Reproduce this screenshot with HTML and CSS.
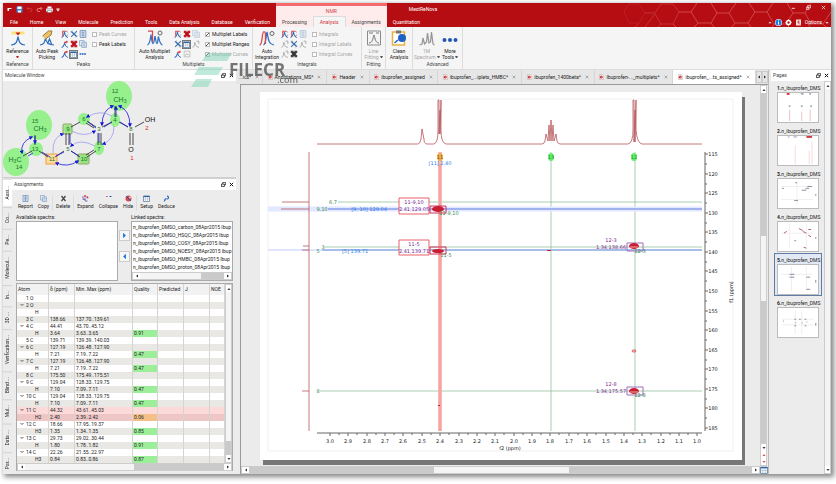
FILE: index.html
```html
<!DOCTYPE html>
<html lang="en">

<head>
    <meta charset="UTF-8">
    <meta name="viewport" content="width=device-width, initial-scale=1.0">
    <title>MestReNova</title>
    <link rel="stylesheet" href="styles.css">
</head>

<body>
    <!-- shared icons -->
    <svg class="defs" aria-hidden="true">
        <symbol id="i-peak" viewBox="0 0 14 14"><path d="M1 13C5 12 5 9 6 3C7 9 8 12 12 13" fill="none" stroke="#2c6fc0" stroke-width="1.8"/><path d="M3 12V2H9" fill="none" stroke="#d9464c" stroke-width="1.8"/><path d="M9 2l3 2M9 12l3-4" stroke="#555"/></symbol>
        <symbol id="i-pick" viewBox="0 0 14 14"><path d="M1 13C5 12 5 9 6 6C7 9 8 12 12 13" fill="none" stroke="#2c6fc0" stroke-width="1.8"/><path d="M5 4l6-3 1 3-4 2z" fill="#d9464c"/></symbol>
        <symbol id="i-tools" viewBox="0 0 14 14"><path d="M2 2l10 10" stroke="#2c6fc0" stroke-width="2.4"/><path d="M12 2L2 12" stroke="#47709c" stroke-width="1.8"/><path d="M1 4l3-3M10 13l3-3" stroke="#8c9db0" stroke-width="1.4"/></symbol>
        <symbol id="i-del" viewBox="0 0 14 14"><path d="M2 2l10 10M12 2L2 12" stroke="#c5161d" stroke-width="4"/><path d="M7 1v12" stroke="#8a1014" stroke-width="1.4"/></symbol>
        <symbol id="i-list" viewBox="0 0 14 14"><path d="M2 1h10v12H2z" fill="#e6eef8" stroke="#5d82ae" stroke-width="1.3"/><path d="M4 4h6M4 7h6M4 10h6M7 2v10" stroke="#5d82ae"/></symbol>
        <symbol id="i-copy" viewBox="0 0 14 14"><path d="M1 1h8v9H1z" fill="#e8eff8" stroke="#7c99bb" stroke-width="1.2"/><path d="M5 4h8v9H5z" fill="#d8e5f3" stroke="#7c99bb" stroke-width="1.2"/><path d="M7 7h4M7 10h4" stroke="#7c99bb"/></symbol>
        <symbol id="i-table" viewBox="0 0 14 14"><path d="M1 2h12v11H1z" fill="#fff" stroke="#44688e" stroke-width="1.3"/><path d="M1 3h12" stroke="#2b66a8" stroke-width="2.4"/><path d="M5 4v9M9 4v9M1 8h12" stroke="#9db2c8"/></symbol>
        <symbol id="i-gray" viewBox="0 0 14 14"><path d="M1 13C4 12 4 9 5 4C6 9 7 12 12 13M8 2h4v5" fill="none" stroke="#a2a2a2" stroke-width="1.5"/></symbol>
        <symbol id="i-graybox" viewBox="0 0 14 14"><path d="M2 2h10v10H2zM4 10l2-4 2 3 2-2" fill="none" stroke="#b4b4b4" stroke-width="1.3"/></symbol>
        <symbol id="i-dots" viewBox="0 0 14 14"><path d="M1 7h3M5 7h3M9 7h3" stroke="#1d5dc0" stroke-width="2.4"/></symbol>
        <symbol id="i-doc" viewBox="0 0 10 12"><path d="M1 1h6l2 2v8H1z" fill="#fff" stroke="#b9a0a0"/><circle cx="4.500" cy="6" r="3" fill="#cc1f26"/><path d="M3 5l3 2" stroke="#fff"/></symbol>
        <symbol id="i-float" viewBox="0 0 12 12"><path d="M4 1h7v6H4z" fill="none" stroke="#111" stroke-width="1.6"/><path d="M1 5h7v6H1z" fill="#fff" stroke="#111" stroke-width="1.8"/></symbol>
        <symbol id="i-close" viewBox="0 0 12 12"><path d="M2 2l8 8M10 2l-8 8" stroke="#111" stroke-width="2.4"/></symbol>
        <symbol id="i-x" viewBox="0 0 12 12"><path d="M2 2l8 8M10 2l-8 8" stroke="#777" stroke-width="1.6"/></symbol>
        <symbol id="i-up" viewBox="0 0 10 10"><path d="M1 7h8L5 3z"/></symbol>
        <symbol id="i-down" viewBox="0 0 10 10"><path d="M1 3h8L5 7z"/></symbol>
        <symbol id="i-left" viewBox="0 0 10 10"><path d="M7 1v8L3 5z"/></symbol>
        <symbol id="i-right" viewBox="0 0 10 10"><path d="M3 1v8l4-4z"/></symbol>
    </svg>

    <div class="window">
        <header class="header">
            <svg class="hexes" viewBox="0 0 212 24" preserveAspectRatio="xMaxYMin slice" aria-hidden="true">
                <g fill="none" stroke="#d0464a" stroke-width="1">
                    <path opacity=".3" d="M5 8l5-7h10l6 9-6 10H10z"/>
                    <path opacity=".6" d="M26 10h10l6-9h12l6 8-6 12H42l-6-10M20 20l-4 4M42 21l-3 3M36 11l-10 13"/>
                    <path d="M60 9h12l6-9M72 9l7 11h13l6-10-6-10M54 21l3 3M79 20l-4 4M92 20l3 4M98 10h12l7-10M110 10l6 10h13l7-11-6-9M116 20l-3 4M129 20l3 4M136 9h12l6-9M148 9l7 12h12l7-11-6-10M155 21l-2 3M167 21l3 3M174 10h12l6-10M186 10l6 11h12l8-12M192 21l-2 3M204 21l3 3"/>
                </g>
            </svg>
            <div class="header-left">
                <div class="quick">
                    <svg viewBox="0 0 14 14"><path d="M3 4h8v2H6v4H3z" fill="#fff"/></svg>
                    <svg viewBox="0 0 14 14"><path d="M1 1h12v12H1z" fill="#3e83d6"/><path d="M3 1h8v5H3zM4 9h6v4H4z" fill="#fff"/></svg>
                    <svg viewBox="0 0 14 14"><path d="M3 5h6a3 3 0 0 1 0 6H7M5 2L2 5l3 3" fill="none" stroke="#de4040" stroke-width="1.5"/></svg>
                    <svg viewBox="0 0 14 14"><path d="M11 5H5a3 3 0 0 0 0 6h3M9 2l3 3-3 3" fill="none" stroke="#f08a8a" stroke-width="1.8"/></svg>
                    <svg viewBox="0 0 14 14"><path d="M3 1h8v4H3z" fill="#fff"/><path d="M0 5h14v6H0z" fill="#d9dee6"/><path d="M3 9h8v4H3z" fill="#fff" stroke="#777"/></svg>
                    <svg class="tiny" viewBox="0 0 10 10" fill="#fff"><path d="M1 1h8v2H1zM1 4h8L5 9z"/></svg>
                </div>
                <nav class="tabs">
                    <button>File</button><button>Home</button><button>View</button><button>Molecule</button><button>Prediction</button><button>Tools</button><button>Data Analysis</button><button>Database</button><button>Verification</button>
                </nav>
            </div>
            <div class="context">
                <span class="context-name">NMR</span>
                <nav class="tabs">
                    <button>Processing</button><button class="active">Analysis</button><button>Assignments</button>
                </nav>
            </div>
            <div class="header-mid">
                <span class="app-name">MestReNova</span>
                <nav class="tabs"><button>Quantitation</button></nav>
            </div>
            <div class="header-right">
                <div class="sys">
                    <button aria-label="Minimize"><svg viewBox="0 0 12 12"><path d="M2 8h7" stroke="#fff" stroke-width="2"/></svg></button>
                    <button aria-label="Restore"><svg viewBox="0 0 12 12"><path d="M4 1h7v6H4zM1 5h6v6H1z" fill="none" stroke="#fff" stroke-width="1.5"/></svg></button>
                    <button aria-label="Close"><svg viewBox="0 0 12 12"><path d="M2 2l8 8M10 2l-8 8" stroke="#fff" stroke-width="1.6"/></svg></button>
                </div>
                <div class="options">
                    <svg viewBox="0 0 10 10" fill="#fff"><use href="#i-up"/></svg>
                    <svg viewBox="0 0 14 14"><circle cx="7" cy="7" r="7" fill="#fff"/><circle cx="7" cy="7" r="6" fill="#1e7be0"/><path d="M7 3v2M7 6v5" stroke="#fff" stroke-width="2"/></svg>
                    <svg viewBox="0 0 14 14"><circle cx="7" cy="7" r="4" fill="none" stroke="#fff" stroke-width="3"/><path d="M7 1v2M7 11v2M1 7h2M11 7h2" stroke="#fff" stroke-width="2"/></svg>
                    <svg viewBox="0 0 14 14"><path d="M2 1h10v12H2z" fill="#f5dede"/><path d="M5 4h3v3H5M7 8l3 3" stroke="#c5161d" stroke-width="1.5" fill="none"/></svg>
                    <button>Options</button>
                    <svg class="tiny" viewBox="0 0 10 10" fill="#fff"><use href="#i-down"/></svg>
                </div>
            </div>
        </header>

        <section class="ribbon">
            <div class="group g-reference">
                <div class="group-body">
                    <button class="big"><svg viewBox="0 0 32 32"><path d="M3 3h26v6H3z" fill="#f8e27c"/><path d="M11 5h10l-5 6z" fill="#c5161d"/><path d="M2 30C12 29 14 25 16 13C18 25 20 29 30 30" fill="none" stroke="#2c6fc0" stroke-width="2.5"/></svg>Reference<i class="caret"></i></button>
                </div>
                <span class="group-name">Reference</span>
            </div>
            <div class="group g-peaks">
                <div class="group-body">
                    <button class="big"><svg viewBox="0 0 32 32"><path d="M2 30C10 29 11 26 13 16C15 26 18 29 30 30M17 28l4-10 4 10" fill="none" stroke="#2c6fc0" stroke-width="2.5"/><path d="M7 12L19 2h7l-2 8-11 8" fill="#e9c26a" stroke="#9d7a33" stroke-width="2"/></svg>Auto Peak<br>Picking</button>
                    <div class="icons">
                        <svg><use href="#i-peak"/></svg><svg><use href="#i-tools"/></svg><svg><use href="#i-list"/></svg>
                        <svg><use href="#i-pick"/></svg><svg><use href="#i-del"/></svg><svg><use href="#i-copy"/></svg>
                        <svg><use href="#i-pick"/></svg><svg class="on"><use href="#i-table"/></svg><svg><use href="#i-dots"/></svg>
                    </div>
                    <div class="checks">
                        <label class="off"><input type="checkbox" disabled>Peak Curves</label>
                        <label><input type="checkbox">Peak Labels</label>
                    </div>
                </div>
                <span class="group-name">Peaks</span>
            </div>
            <div class="group g-multiplets">
                <div class="group-body">
                    <button class="big"><svg viewBox="0 0 32 32"><path d="M1 30C6 28 6 22 8 9C10 22 10 27 12 27S14 22 16 12C18 22 18 27 20 27S21 22 23 13C25 24 27 29 31 30" fill="none" stroke="#2c6fc0" stroke-width="2.5"/><path d="M2 2h9v22" fill="none" stroke="#d9464c" stroke-width="2.5"/><circle cx="26" cy="6" r="4" fill="none" stroke="#666" stroke-width="2"/></svg>Auto Multiplet<br>Analysis</button>
                    <div class="icons">
                        <svg><use href="#i-peak"/></svg><svg><use href="#i-del"/></svg><svg class="dim"><use href="#i-copy"/></svg>
                        <svg><use href="#i-tools"/></svg><svg class="on"><use href="#i-table"/></svg><svg><use href="#i-gray"/></svg>
                        <svg><use href="#i-pick"/></svg><svg><use href="#i-graybox"/></svg>
                    </div>
                    <div class="checks">
                        <label><input type="checkbox" checked>Multiplet Labels</label>
                        <label><input type="checkbox" checked>Multiplet Ranges</label>
                        <label class="off"><input type="checkbox" checked disabled>Multiplet Curves</label>
                    </div>
                </div>
                <span class="group-name">Multiplets</span>
            </div>
            <div class="group g-integrals">
                <div class="group-body">
                    <button class="big"><svg viewBox="0 0 32 32"><path d="M9 30C14 28 13 18 16 4C19 18 18 28 30 30" fill="none" stroke="#2c6fc0" stroke-width="2.5"/><path d="M1 30C8 30 5 3 10 3S12 20 13 28" fill="none" stroke="#d9464c" stroke-width="2.5"/><circle cx="26" cy="7" r="4" fill="none" stroke="#666" stroke-width="2"/></svg>Auto<br>Integration</button>
                    <div class="icons">
                        <svg><use href="#i-peak"/></svg><svg><use href="#i-peak"/></svg><svg class="dim"><use href="#i-list"/></svg>
                        <svg><use href="#i-gray"/></svg><svg><use href="#i-tools"/></svg><svg><use href="#i-gray"/></svg>
                        <svg><use href="#i-gray"/></svg><svg class="mono"><use href="#i-del"/></svg>
                    </div>
                    <div class="checks">
                        <label class="off"><input type="checkbox" disabled>Integrals</label>
                        <label class="off"><input type="checkbox" disabled>Integral Labels</label>
                        <label class="off"><input type="checkbox" disabled>Integral Curves</label>
                    </div>
                </div>
                <span class="group-name">Integrals</span>
            </div>
            <div class="group g-fitting">
                <div class="group-body">
                    <button class="big off"><svg viewBox="0 0 32 32"><path d="M3 2h26v28H3z" fill="#f4f4f4" stroke="#8b8b8b" stroke-width="2"/><path d="M6 26C14 25 13 18 16 10C19 18 18 25 26 26M6 6h8M20 6h6" fill="none" stroke="#777" stroke-width="2"/></svg>Line<br>Fitting<i class="caret side"></i></button>
                </div>
                <span class="group-name">Fitting</span>
            </div>
            <div class="group g-clean">
                <div class="group-body">
                    <button class="big"><svg viewBox="0 0 32 32"><path d="M3 4h24v26H3z" fill="#fff" stroke="#e8b33c" stroke-width="3"/><path d="M10 1h10v6H10z" fill="#777"/><circle cx="22" cy="16" r="8" fill="#1d62c4"/><path d="M7 26l7-6" stroke="#1d62c4" stroke-width="3"/></svg>Clean<br>Analysis</button>
                </div>
                <span class="group-name">&nbsp;</span>
            </div>
            <div class="group g-advanced">
                <div class="group-body">
                    <button class="big off"><svg viewBox="0 0 32 32"><path d="M1 30l5-2 2-12 3 12 4-4 2-18 3 20 3-2 2-20 3 24 3 2" fill="none" stroke="#969696" stroke-width="2.5"/></svg>1M<br>Spectrum<i class="caret side"></i></button>
                    <button class="big"><svg viewBox="0 0 32 32" fill="#2254b8"><circle cx="5" cy="20" r="4"/><circle cx="16" cy="20" r="4"/><circle cx="27" cy="20" r="4"/></svg>More<br>Tools<i class="caret side"></i></button>
                </div>
                <span class="group-name">Advanced</span>
            </div>
        </section>

        <main class="main">
            <aside class="left">
                <section class="panel">
                    <h2 class="panel-title">Molecule Window<span><svg><use href="#i-float"/></svg><svg><use href="#i-close"/></svg></span></h2>
                    <svg class="molecule" viewBox="3 81 233 96">
                        <defs>
                            <marker id="arr" viewBox="0 0 6 6" refX="4" refY="3" markerWidth="4" markerHeight="4" markerUnits="userSpaceOnUse" orient="auto-start-reverse"><path d="M0 0l6 3-6 3z" fill="#1616d8"/></marker>
                        </defs>
                        <g fill="#96f08c">
                            <ellipse cx="119" cy="96" rx="13" ry="15"/><ellipse cx="39" cy="125" rx="13" ry="15"/><ellipse cx="16" cy="162" rx="13" ry="14"/>
                            <ellipse cx="115" cy="120" rx="5" ry="7"/><circle cx="84" cy="119" r="6"/><ellipse cx="99" cy="148" rx="5" ry="7"/><circle cx="36" cy="149" r="7"/>
                            <circle cx="68" cy="129" r="4"/><circle cx="84" cy="159" r="5"/>
                        </g>
                        <g fill="#96dc78" fill-opacity=".6" stroke="#8aa860"><rect x="63" y="124" width="9" height="10" rx="1"/><rect x="78" y="154" width="11" height="10" rx="1"/></g>
                        <rect x="46" y="154" width="11" height="10" fill="#ffdc9c" stroke="#ee9c44"/>
                        <path d="M102 127l10-5M119 122l9 5M135 127l9-5M115 117v-11M87 121l9 6M86 123l8 5M98 133v12M101 133v12M96 151l-9 6M94 150l-8 5M80 157l-9-6M66 145v-12M69 145v-12M71 127l9-5M64 151l-9 6M48 157l-9-6M32 151l-9 5M35 145v-10M130 133v12M133 133v12" stroke="#222" stroke-width=".8" fill="none"/>
                        <g fill="none" stroke="#1616d8" stroke-width=".8" marker-start="url(#arr)" marker-end="url(#arr)">
                            <path d="M113 106Q102 110 102 125"/><path d="M119 106Q130 110 130 126"/><path d="M32 137Q20 142 22 153"/><path d="M56 163Q68 168 78 161"/>
                            <path d="M116 107v10M120 122l8 5M104 127l8-5M88 122l8 6M99 133v10M70 134v10M71 151l8 5M42 152l8 5M56 156l8-4M28 156l5-3M35 136v7"/>
                        </g>
                        <g fill="none" stroke="#9c9cf0" stroke-width=".8" marker-end="url(#arr)">
                            <path d="M112 116Q100 109 87 117"/><path d="M114 126Q114 140 103 144"/><path d="M72 131Q84 138 95 131"/><path d="M53 153Q52 137 63 134"/><path d="M95 146Q80 138 71 146"/>
                        </g>
                        <g class="atoms">
                            <text x="115" y="93">12</text><text x="120" y="102" class="el">CH<tspan dy="1" class="sub">3</tspan></text>
                            <text x="35" y="123">15</text><text x="40" y="131" class="el">CH<tspan dy="1" class="sub">3</tspan></text>
                            <text x="15" y="162" class="el">H<tspan dy="1" class="sub">3</tspan><tspan dy="-1">C</tspan></text><text x="19" y="169">14</text>
                            <text x="115" y="122">4</text><text x="84" y="121">6</text><text x="99" y="131">3</text><text x="99" y="151">7</text><text x="84" y="161">10</text><text x="68" y="151">5</text><text x="68" y="131">9</text><text x="131" y="131">8</text><text x="52" y="161">11</text><text x="35" y="151">13</text>
                            <text x="150" y="122" class="el dark">OH</text><text x="131" y="152" class="el dark">O</text>
                            <text x="147" y="130" class="red">2</text><text x="132" y="160" class="red">1</text>
                        </g>
                    </svg>
                </section>
                <section class="assign">
                    <nav class="side-tabs">
                        <button class="active">Assi...</button><button>Co...</button><button>Pe...</button><button>Molecul...</button><button>In...</button><button>3D ...</button><button>Verification...</button><button>Blind ...</button><button>Mul...</button><button>Data ...</button><button>Par...</button>
                    </nav>
                    <div class="assign-body">
                        <h2 class="panel-title">Assignments<span><svg><use href="#i-float"/></svg><svg><use href="#i-close"/></svg></span></h2>
                        <div class="toolbar">
                            <button><svg><use href="#i-list"/></svg>Report</button>
                            <button><svg><use href="#i-copy"/></svg>Copy</button>
                            <hr>
                            <button><svg viewBox="0 0 14 14"><path d="M3 2l8 10M11 2L3 12" stroke="#444" stroke-width="2.5"/></svg>Delete</button>
                            <hr>
                            <button><svg viewBox="0 0 14 14"><path d="M2 2v7h5M6 5v7h5M10 2v3" fill="none" stroke="#7a6fc0" stroke-width="2"/><circle cx="6" cy="2" r="2" fill="#d9464c"/><circle cx="11" cy="5" r="2" fill="#d9464c"/></svg>Expand</button>
                            <button><svg viewBox="0 0 14 14"><path d="M2 3h3" stroke="#d9464c" stroke-width="2"/><path d="M9 3h4" stroke="#2254b8" stroke-width="2"/></svg>Collapse</button>
                            <button><svg viewBox="0 0 14 14"><circle cx="7" cy="7" r="6" fill="#d9464c"/><path d="M2 2l10 10" stroke="#2254b8" stroke-width="2"/><circle cx="10" cy="5" r="2" fill="#f5d0d8"/></svg>Hide</button>
                            <hr>
                            <button><svg><use href="#i-table"/></svg>Setup</button>
                            <button><svg viewBox="0 0 14 14"><path d="M3 13c0-5 2-6 4-6M8 2a3 3 0 1 1 0 6" fill="none" stroke="#2c6fc0" stroke-width="2.5"/></svg>Deduce</button>
                        </div>
                        <div class="spectra">
                            <div class="available"><h3>Available spectra:</h3><ul></ul></div>
                            <div class="move">
                                <button aria-label="Link"><svg viewBox="0 0 10 10" fill="#1472e0"><use href="#i-right"/></svg></button>
                                <button aria-label="Unlink"><svg viewBox="0 0 10 10" fill="#1472e0"><use href="#i-left"/></svg></button>
                            </div>
                            <div class="linked">
                                <h3>Linked spectra:</h3>
                                <div class="list-box">
                                    <ul>
                                        <li>n_ibuprofen_DMSO_carbon_08Apr2015 Ibup</li>
                                        <li>n_ibuprofen_DMSO_HSQC_08Apr2015 Ibup</li>
                                        <li>n_ibuprofen_DMSO_COSY_08Apr2015 Ibup</li>
                                        <li>n_ibuprofen_DMSO_NOESY_08Apr2015 Ibup</li>
                                        <li>n_ibuprofen_DMSO_HMBC_08Apr2015 Ibup</li>
                                        <li>n_ibuprofen_DMSO_proton_08Apr2015 Ibup</li>
                                    </ul>
                                    <div class="bar h"><button><svg><use href="#i-left"/></svg></button><i class="thumb wide"></i><i class="rest"></i><button><svg><use href="#i-right"/></svg></button></div>
                                </div>
                            </div>
                        </div>
                        <div class="table-box">
                            <table>
                                <thead>
                                    <tr><th>Atom</th><th>δ (ppm)</th><th>Min..Max (ppm)</th><th>Quality</th><th>Predicted</th><th>J</th><th>NOE</th></tr>
                                </thead>
                                <tbody id="atoms"></tbody>
                            </table>
                            <div class="bar v"><button><svg><use href="#i-up"/></svg></button><i class="thumb tall"></i><i class="rest"></i><button><svg><use href="#i-down"/></svg></button></div>
                            <div class="bar h"><button><svg><use href="#i-left"/></svg></button><i class="thumb half"></i><i class="rest"></i><button><svg><use href="#i-right"/></svg></button></div>
                        </div>
                    </div>
                </section>
            </aside>

            <section class="center">
                <nav class="doc-tabs">
                    <div><button>...ics*</button><svg class="x"><use href="#i-x"/></svg></div>
                    <div><svg><use href="#i-doc"/></svg><button>Annotations_MS*</button><svg class="x"><use href="#i-x"/></svg></div>
                    <div><svg><use href="#i-doc"/></svg><button>Header</button><svg class="x"><use href="#i-x"/></svg></div>
                    <div><svg><use href="#i-doc"/></svg><button>ibuprofen_assigned</button><svg class="x"><use href="#i-x"/></svg></div>
                    <div><svg><use href="#i-doc"/></svg><button>ibuprofen_...iplets_HMBC*</button><svg class="x"><use href="#i-x"/></svg></div>
                    <div><svg><use href="#i-doc"/></svg><button>ibuprofen_1400beta*</button><svg class="x"><use href="#i-x"/></svg></div>
                    <div><svg><use href="#i-doc"/></svg><button>Ibuprofen-..._multiplets*</button><svg class="x"><use href="#i-x"/></svg></div>
                    <div class="active"><svg><use href="#i-doc"/></svg><button>ibuprofen_...ts_assigned*</button><svg class="x"><use href="#i-x"/></svg></div>
                    <span class="scroll-tabs"><button><svg><use href="#i-left"/></svg></button><button><svg><use href="#i-right"/></svg></button></span>
                </nav>
                <div class="canvas">
                    <div class="viewport">
                        <div class="sheet">
                            <svg class="plot" viewBox="260 92 482 368">
                                <path d="M268 99h465v352H268z" fill="none" stroke="#f0f0f0"/>
                                <g stroke="#84b890" stroke-opacity=".7">
                                    <path d="M338 202h364M325 247h377M320 391h382M551 152v279M635 152v279"/>
                                </g>
                                <path d="M268 209h434" stroke="#e2e8ff" stroke-width="5"/>
                                <path d="M328 209h374" stroke="#a2b2f0" stroke-width="2"/>
                                <path d="M268 250h434" stroke="#dfe5ff" stroke-width="2"/>
                                <path d="M322 250h380" stroke="#6f98d0"/>
                                <path d="M440 152v279" stroke="#f9b8b4" stroke-width="4"/>
                                <path d="M440 164v267" stroke="#ec918c" stroke-width="1"/>
                                <!-- 1D traces -->
                                <g fill="none" stroke="#b5555b" stroke-width=".8">
                                    <path d="M317 144H418Q420 144 421 139L422 129L424 139Q424 144 427 144H434Q438 143 438 130V100H439V134L440 110L440 134L441 100V130Q441 143 446 144H542L544 143L545 141L546 134L548 141L549 125L550 141L551 120L552 141L553 125L554 141L556 134L557 141L558 143L560 144H628Q633 143 633 130V100H634V142L635 110V142L636 100V130Q637 143 642 144H702"/>
                                    <path d="M309 152V431M282 202h27M281 209h28M303 246h6M302 250h7M302 391h7"/>
                                </g>
                                <ellipse cx="440" cy="157" rx="3" ry="4" fill="#f0ae4c"/>
                                <ellipse cx="551" cy="157" rx="3" ry="4" fill="#62f062"/>
                                <ellipse cx="634" cy="157" rx="3" ry="4" fill="#62f062"/>
                                <!-- cross peaks -->
                                <g fill="#fff" fill-opacity=".8" stroke="#e8606a"><path d="M399 198h30v16h-30zM399 240h30v15h-30z"/></g>
                                <g fill="none" stroke="#d0305c"><path d="M430 206h16v7h-16zM430 247h16v7h-16z"/></g>
                                <g fill="none" stroke="#a070b8"><path d="M627 243h16v8h-16zM627 387h16v8h-16z"/></g>
                                <g fill="#c81e32">
                                    <ellipse cx="438" cy="209" rx="6" ry="3"/><ellipse cx="438" cy="251" rx="6" ry="2"/>
                                    <ellipse cx="634" cy="246" rx="5" ry="3"/><ellipse cx="634" cy="391" rx="5" ry="3"/>
                                    <path d="M547 250h4v1h-4zM438 405h2v1h-2z"/>
                                </g>
                                <path d="M630 247h8M630 392h8" stroke="#f4a4aa"/>
                                <ellipse cx="634" cy="351" rx="2" ry="1" fill="none" stroke="#e05058"/>
                                <g class="labels">
                                    <text x="440" y="159" class="brown">11</text><text x="551" y="159" class="green">13</text><text x="634" y="159" class="green">12</text>
                                    <text x="440" y="165" class="blue">[11] 2.40</text>
                                    <text x="333" y="204" class="green">6,7</text><text x="322" y="211" class="green">9,10</text>
                                    <text x="323" y="249" class="green">3</text><text x="318" y="253" class="green">5</text><text x="318" y="393" class="green">8</text>
                                    <text x="369" y="211" class="blue">[9, 10] 129.04</text><text x="355" y="253" class="blue">[5] 139.71</text>
                                    <text x="414" y="204" class="purple">11-9,10</text><text x="414" y="211" class="purple">2.41,129.05</text>
                                    <text x="414" y="246" class="purple">11-5</text><text x="414" y="253" class="purple">2.41,139.71</text>
                                    <text x="611" y="242" class="purple">12-3</text><text x="611" y="249" class="purple">1.34,138.66</text>
                                    <text x="611" y="386" class="purple">12-8</text><text x="611" y="393" class="purple">1.34,175.57</text>
                                    <text x="449" y="215" class="green">11-9,10</text><text x="446" y="257" class="green">11-5</text>
                                    <text x="640" y="253" class="green">12-3</text><text x="640" y="397" class="green">12-8</text>
                                </g>
                                <g id="axes" class="axes">
                                    <path d="M317 433H702M705 152V431"/>
                                    <text x="510" y="450">f2 (ppm)</text>
                                    <text transform="translate(733 292) rotate(-90)">f1 (ppm)</text>
                                </g>
                            </svg>
                        </div>
                    </div>
                    <div class="bar v page-bar"><button><svg><use href="#i-up"/></svg></button><i class="above"></i><i class="thumb"></i><i class="rest"></i><button><svg><use href="#i-down"/></svg></button><button class="red"><svg><use href="#i-up"/></svg></button><button class="red"><svg><use href="#i-down"/></svg></button></div>
                    <div class="bar h page-bar"><button><svg><use href="#i-left"/></svg></button><i class="above"></i><i class="thumb"></i><i class="rest"></i><button><svg><use href="#i-right"/></svg></button></div>
                    <svg class="corner" viewBox="0 0 14 14"><use href="#i-table"/></svg>
                </div>
            </section>

            <aside class="pages">
                <h2 class="panel-title">Pages<span><svg><use href="#i-float"/></svg><svg><use href="#i-close"/></svg></span></h2>
                <div class="pages-body">
                    <ol>
                        <li><p><b>1.</b>n_ibuprofen_DMS</p><svg viewBox="0 0 42 31"><path d="M12 30V18M25 30V20M34 30V18" stroke="#ecc0c4"/><path d="M24 1h3M33 1h2M11 14h2M24 14h2M34 14h2" stroke="#667"/><path d="M9 1h3" stroke="#e03038" stroke-width="2"/></svg></li>
                        <li><p><b>2.</b>n_ibuprofen_DMS</p><svg viewBox="0 0 42 31"><path d="M18 30V10M33 30V16M36 30V6" stroke="#f4d6d8"/><path d="M16 1h4M10 1h2" stroke="#99c"/><path d="M30 1h6" stroke="#d03844" stroke-width="2"/></svg></li>
                        <li><p><b>3.</b>n_ibuprofen_DMS</p><svg viewBox="0 0 42 31"><path d="M3 8h34M20 2v26M3 22h34" stroke="#eee"/><path d="M18 4h2M31 8h5M29 10h4M25 12h5M17 23h4M4 10h2M40 16v2" stroke="#889"/></svg></li>
                        <li><p><b>4.</b>n_ibuprofen_DMS</p><svg viewBox="0 0 42 31"><path d="M3 12h34M12 2v26M30 2v26" stroke="#eee"/><path d="M22 7l4 2M26 10l4 2M32 14l3 2M6 12l3-2M32 8h3M27 27l3 1" stroke="#a8577c"/><path d="M17 20h2M40 16v2" stroke="#889"/></svg></li>
                        <li class="active"><p><b>5.</b>n_ibuprofen_DMS</p><svg viewBox="0 0 42 31"><path d="M3 10h34M14 2v26M30 2v26" stroke="#eee"/><path d="M12 10h5M12 13h5M30 13h4M30 26h4M40 16v3" stroke="#889"/></svg></li>
                        <li><p><b>6.</b>n_ibuprofen_DMS</p><svg viewBox="0 0 42 31"><path d="M4 12h34M4 18h34M18 3v25M25 3v25" stroke="#eee"/><path d="M17 12h2M22 12h2M28 12h2M18 16h1M25 16h1M30 15h1M17 19h2M28 19h2M5 14h1M40 16v3" stroke="#889"/></svg></li>
                    </ol>
                    <div class="bar v"><button><svg><use href="#i-up"/></svg></button><i class="thumb"></i><button><svg><use href="#i-down"/></svg></button></div>
                </div>
            </aside>
        </main>

        <div class="watermark">
            <svg viewBox="0 0 38 36" fill="#7cd6b6"><path d="M13 1h25l-5 8H8zM5 15h24l-5 8H0zM2 27h16l-4 8H-3z"/></svg>
            <b>FILECR</b><small>.com</small>
        </div>
    </div>

    <script src="script.js"></script>
</body>

</html>
```
FILE: styles.css
```css
* {
    box-sizing: border-box;
}

body {
    margin: 0;
    padding: 3px 5px 10px 3px;
    background: #fff;
    color: #222;
    font-family: Roboto, "Liberation Sans", sans-serif;
    font-size: 5px;
    line-height: 7px;
}

h2, h3, p, ul, ol {
    margin: 0;
    padding: 0;
    font-size: 5px;
    font-weight: normal;
    list-style: none;
}

button {
    margin: 0;
    padding: 0;
    border: 0;
    background: none;
    color: inherit;
    font: inherit;
    white-space: nowrap;
}

svg {
    display: block;
    width: 7px;
    height: 7px;
    flex: none;
}

.defs {
    position: absolute;
    width: 0;
    height: 0;
}

.window {
    position: relative;
    display: flex;
    flex-direction: column;
    height: calc(100vh - 13px);
    background: #ececec;
    box-shadow: 2px 2px 5px 1px #888;
}

/* header */
.header {
    position: relative;
    display: flex;
    flex: none;
    height: 24px;
    background: #b50d12;
    color: #fff;
}

.hexes {
    position: absolute;
    right: 0;
    top: 0;
    width: 212px;
    height: 24px;
}

.header-left,
.context,
.header-mid {
    display: flex;
    flex-direction: column;
    justify-content: space-between;
}

.quick {
    display: flex;
    align-items: center;
    gap: 3px;
    padding: 3px 0 0 3px;
}

.quick .tiny,
.options .tiny {
    width: 4px;
    height: 4px;
}

.tabs {
    display: flex;
}

.tabs button {
    height: 11px;
    padding: 1px 6px 0;
}

.header-left .tabs {
    padding-left: 1px;
}

.context {
    border-top: 3px solid #f46a6c;
    background: #fdeceb;
    color: #444;
}

.context-name {
    padding-top: 2px;
    color: #d2474b;
    text-align: center;
}

.context .tabs .active {
    border: 1px solid #ddd;
    border-bottom: 0;
    background: #f5f5f5;
    color: #cf3338;
}

.app-name {
    padding: 3px 0 0 22px;
}

.header-right {
    position: relative;
    display: flex;
    flex-direction: column;
    justify-content: space-between;
    align-items: flex-end;
    margin-left: auto;
    padding: 2px 2px 1px 0;
}

.sys {
    display: flex;
    gap: 10px;
    padding-right: 3px;
}

.sys svg {
    width: 5px;
    height: 5px;
}

.options {
    display: flex;
    align-items: center;
    gap: 3px;
}

.options svg:first-child {
    width: 4px;
}

/* ribbon */
.ribbon {
    display: flex;
    flex: none;
    height: 43px;
    border-bottom: 1px solid #ddd;
    background: #f5f5f5;
}

.group {
    display: flex;
    flex-direction: column;
    justify-content: space-between;
    padding: 2px 1px 1px;
    border-right: 1px solid #dcdcdc;
}

.g-reference { width: 30px; }
.g-peaks { width: 102px; }
.g-multiplets { width: 118px; }
.g-integrals { width: 109px; }
.g-fitting { width: 24px; }
.g-clean { width: 27px; }
.g-advanced { width: 50px; }

.group-body {
    display: flex;
    justify-content: center;
}

.group-name {
    color: #444;
    text-align: center;
}

.big {
    position: relative;
    min-width: 26px;
    line-height: 6px;
}

.g-multiplets .big {
    min-width: 37px;
}

.g-fitting .big,
.g-clean .big,
.g-advanced .big {
    min-width: 22px;
}

.big svg {
    width: 16px;
    height: 16px;
    margin: 1px auto 2px;
}

.caret {
    display: block;
    width: 3px;
    margin: 2px auto;
    border: 1px solid transparent;
    border-top: 2px solid #b3262c;
}

.caret.side {
    display: inline-block;
    margin: 0 0 0 1px;
    border-top-color: #555;
}

.off {
    color: #a6a6a6;
}

.icons {
    display: grid;
    grid-template-columns: repeat(3, 9px);
    grid-auto-rows: 10px;
    place-items: center;
    height: 30px;
}

.icons svg {
    width: 8px;
    height: 8px;
}

.icons .on {
    width: 9px;
    height: 9px;
    border: 1px solid #777;
    background: #cfd6de;
}

.dim {
    opacity: .5;
}

.mono {
    filter: grayscale(1);
}

.checks {
    flex: 1;
    padding-left: 5px;
}

.checks label {
    display: flex;
    align-items: center;
    gap: 2px;
    height: 10px;
    white-space: nowrap;
}

.checks input {
    appearance: none;
    width: 5px;
    height: 5px;
    margin: 0;
    border: 1px solid #bbb;
    background: #fff;
}

.checks input:checked {
    background: linear-gradient(135deg, #fff 40%, #555 40% 60%, #fff 60%);
}

/* main */
.main {
    display: grid;
    grid-template-columns: 233px 1fr 63px;
    flex: 1;
    min-height: 0;
}

.left,
.center,
.pages {
    display: flex;
    flex-direction: column;
    min-width: 0;
    min-height: 0;
}

.panel-title {
    display: flex;
    justify-content: space-between;
    align-items: center;
    height: 11px;
    padding: 0 2px;
    background: #fff;
    color: #444;
}

.panel-title span {
    display: flex;
    gap: 3px;
}

.panel-title svg {
    width: 5px;
    height: 5px;
}

.molecule {
    width: 100%;
    height: auto;
}

.atoms text {
    fill: #147828;
    font: 6px "Liberation Sans", Arial, sans-serif;
    text-anchor: middle;
}

.atoms .el {
    font-size: 7px;
}

.atoms .sub {
    font-size: 5px;
}

.atoms .dark {
    fill: #111;
}

.atoms .red {
    fill: #e3202a;
}

.assign {
    display: flex;
    flex: 1;
    min-height: 0;
    border-top: 2px solid #d0d0d0;
}

.side-tabs {
    display: flex;
    flex-direction: column;
    justify-content: space-between;
    width: 9px;
}

.side-tabs button {
    flex: none;
    width: 9px;
    padding: 5px 0;
    border-bottom: 1px solid #d2d2d2;
    writing-mode: vertical-rl;
    transform: rotate(180deg);
}

.side-tabs .active {
    padding: 6px 0;
    background: #fff;
}

.assign-body {
    display: flex;
    flex-direction: column;
    flex: 1;
    min-width: 0;
}

.toolbar {
    display: flex;
    gap: 5px;
    height: 23px;
    padding: 5px 6px 0;
}

.toolbar svg {
    margin: 0 auto 1px;
}

.toolbar hr {
    width: 1px;
    height: 16px;
    margin: 0 -2px;
    border: 0;
    background: #ddd;
}

.toolbar button {
    display: block;
    height: 15px;
}

.spectra {
    display: flex;
    height: 68px;
    padding: 0 3px 0 4px;
}

.spectra h3 {
    height: 8px;
    line-height: 8px;
}

.available,
.linked {
    display: flex;
    flex-direction: column;
    flex: 1;
    min-width: 0;
}

.available ul,
.list-box {
    flex: 1;
    border: 1px solid #aaa;
    background: #fff;
}

.list-box {
    display: flex;
    flex-direction: column;
    justify-content: space-between;
}

.list-box ul {
    padding: 1px;
    overflow: hidden;
    line-height: 8px;
    white-space: nowrap;
}

.move {
    display: flex;
    flex-direction: column;
    gap: 10px;
    padding: 17px 1px 0;
}

.move button {
    display: grid;
    place-items: center;
    width: 11px;
    height: 11px;
    border: 1px solid #ccc;
    background: #f6f6f6;
}

.table-box {
    display: grid;
    grid-template: 1fr 8px / 1fr 7px;
    flex: 1;
    min-height: 0;
    margin: 2px 3px 3px 4px;
    border: 1px solid #aaa;
    background: #fff;
}

.table-box .bar.h {
    grid-column: 1 / 3;
}

table {
    width: 100%;
    border-spacing: 0;
    table-layout: fixed;
}

th,
td {
    height: 7px;
    padding: 0 1px;
    border-right: 1px solid #d4d4d4;
    line-height: 7px;
    text-align: left;
    white-space: nowrap;
}

th {
    height: 11px;
    background: #f2f2f2;
    font-weight: normal;
}

th:nth-child(1) { width: 32px; }
th:nth-child(2) { width: 26px; }
th:nth-child(3) { width: 58px; }
th:nth-child(4) { width: 25px; }
th:nth-child(5) { width: 26px; }
th:nth-child(6) { width: 26px; }

tbody tr:nth-child(even) {
    background: #e9e8e4;
}

tbody .picked {
    background: #fcdada;
}

tbody .picked:nth-child(even) {
    background: #eec6c6;
}

.atom {
    padding-left: 9px;
}

.atom.open {
    padding-left: 3px;
}

.atom.open svg {
    display: inline-block;
    width: 4px;
    height: 4px;
    margin-right: 2px;
}

.atom.child {
    padding-left: 18px;
}

.good {
    background: #9cee98;
}

.bad {
    background: #f4c088;
}

/* scroll bars */
.bar {
    display: flex;
    background: #f0f0f0;
    border: 1px solid #ccc;
}

.bar.v {
    flex-direction: column;
    width: 7px;
}

.bar.h {
    height: 8px;
}

.bar button {
    display: grid;
    place-items: center;
    flex: none;
    width: 7px;
    height: 7px;
    background: #fff;
}

.bar.v button {
    width: 5px;
}

.bar.h button {
    height: 6px;
}

.bar button svg {
    width: 4px;
    height: 4px;
}

.bar .red {
    fill: #cc1f26;
}

.thumb {
    flex: 1;
    background: #f4f4f4;
}

.rest,
.above {
    flex: 1;
    background: #cacaca;
}

.thumb.wide { flex: 62; }
.thumb.wide + .rest { flex: 23; }
.thumb.tall { flex: 149; }
.thumb.tall + .rest { flex: 14; }
.thumb.half { flex: 107; }
.thumb.half + .rest { flex: 89; }

.page-bar.v .above { flex: 143; }
.page-bar.v .thumb { flex: 64; }
.page-bar.v .rest { flex: 143; }
.page-bar.h .above { flex: 185; }
.page-bar.h .thumb { flex: 135; }
.page-bar.h .rest { flex: 183; }

/* documents */
.doc-tabs {
    display: grid;
    grid-template-columns: 27fr 64fr 43fr 68fr 84fr 73fr 78fr 83fr 12fr;
    height: 14px;
    background: #e6e6e6;
}

.doc-tabs div {
    display: flex;
    align-items: center;
    justify-content: center;
    gap: 2px;
    min-width: 0;
    border-right: 1px solid #d6d6d6;
}

.doc-tabs svg {
    width: 5px;
    height: 6px;
}

.doc-tabs .x {
    width: 4px;
    height: 4px;
    margin-left: 2px;
}

.doc-tabs .active {
    background: #fff;
}

.scroll-tabs {
    display: flex;
    align-items: center;
}

.scroll-tabs button {
    width: 6px;
    padding: 2px 0;
    border: 1px solid #ccc;
}

.scroll-tabs svg {
    width: 4px;
}

.canvas {
    display: grid;
    grid-template: 1fr 8px / 1fr 8px;
    flex: 1;
    min-height: 0;
    margin-left: 4px;
    border-left: 1px solid #999;
    border-top: 1px solid #999;
}

.viewport {
    min-width: 0;
    min-height: 0;
    padding: 7px 18px 6px 19px;
    background: #ebebeb;
}

.sheet {
    height: 100%;
    background: #fff;
    box-shadow: 3px 5px 0 #777;
}

.plot {
    width: 100%;
    height: 100%;
}

.labels text,
.axes text {
    font: 5px "DejaVu Sans", Verdana, sans-serif;
    text-anchor: middle;
}

.axes path {
    fill: none;
    stroke: #666;
}

.axes text {
    fill: #222;
}

.green { fill: #2f8a50; }
.blue { fill: #2f7fe6; }
.purple { fill: #7c1f90; }
.brown { fill: #7c5010; }

.corner {
    width: 8px;
    height: 8px;
}

.pages {
    padding-left: 2px;
    border-left: 1px solid #bbb;
}

.pages-body {
    display: flex;
    flex: 1;
    justify-content: space-between;
    min-height: 0;
}

.pages ol {
    padding-left: 3px;
}

.pages li {
    width: 48px;
    height: 43px;
    padding: 3px 2px 0;
    border: 1px solid transparent;
}

.pages li.active {
    border-color: #5f7ba6;
    background: #e3e9f4;
}

.pages p {
    white-space: nowrap;
}

.pages li svg {
    width: 42px;
    height: 31px;
    border: 1px solid #bbb;
    background: #fff;
}

/* site mark */
.watermark {
    position: absolute;
    left: 191px;
    top: 49px;
    display: flex;
    align-items: flex-start;
    color: #555;
    opacity: .8;
    pointer-events: none;
}

.watermark svg {
    width: 38px;
    height: 36px;
    opacity: .6;
    overflow: visible;
}

.watermark b {
    margin-left: -3px;
    padding-top: 9px;
    font: bold 17px/18px "Open Sans", sans-serif;
}

.watermark small {
    margin: 23px 0 0 -8px;
    font: 600 9px/10px "Open Sans", sans-serif;
}
```
FILE: script.js
```js
// atom, shift, range, quality
const atoms = [
    ['1 O'],
    ['v2 O'],
    ['-H'],
    ['3 C', '138.66', '137.70..139.61'],
    ['v4 C', '44.41', '43.70..45.12'],
    ['-H', '3.64', '3.63..3.65', '0.91'],
    ['5 C', '139.71', '139.39..140.03'],
    ['v6 C', '127.19', '126.48..127.90'],
    ['-H', '7.21', '7.19..7.22', '0.47'],
    ['v7 C', '127.19', '126.48..127.90'],
    ['-H', '7.21', '7.19..7.22', '0.47'],
    ['8 C', '175.50', '175.49..175.51'],
    ['v9 C', '129.04', '128.33..129.75'],
    ['-H', '7.10', '7.09..7.11', '0.47'],
    ['v10 C', '129.04', '128.33..129.75'],
    ['-H', '7.10', '7.09..7.11', '0.47'],
    ['v11 C', '44.32', '43.61..45.03'],
    ['-H2', '2.40', '2.39..2.42', '0.06'],
    ['v12 C', '18.66', '17.95..19.37'],
    ['-H3', '1.35', '1.34..1.35', '0.85'],
    ['v13 C', '29.73', '29.02..30.44'],
    ['-H', '1.80', '1.78..1.82', '0.91'],
    ['v14 C', '22.26', '21.55..22.97'],
    ['-H3', '0.84', '0.83..0.86', '0.87']
];

const chevron = '<svg viewBox="0 0 8 8"><path d="M1 2l3 3 3-3" fill="none" stroke="#333" stroke-width="1.5"/></svg>';

document.querySelector('#atoms').innerHTML = atoms.map(([name, shift = '', range = '', quality = ''], i) => {
    let type = '';
    if (name[0] === 'v') type = 'open';
    if (name[0] === '-') type = 'child';
    const label = (type === 'open' ? chevron : '') + name.replace(/^[v-]/, '');
    const level = quality === '' ? '' : (quality < 0.3 ? 'bad' : 'good');
    const picked = i === 16 || i === 17 ? 'picked' : '';
    return `<tr class="${picked}"><td class="atom ${type}">${label}</td><td>${shift}</td><td>${range}</td><td class="${level}">${quality}</td><td></td><td></td><td></td></tr>`;
}).join('');

// axis ticks and numbers
let ticks = '';
let numbers = '';
for (let i = 0; i <= 20; i++) {
    const x = Math.round(330 + i * 18.37);
    ticks += `M${x} 433v3`;
    if (i < 20) ticks += `M${x + 9} 433v2`;
    numbers += `<text x="${x}" y="443">${(3 - i / 10).toFixed(1)}</text>`;
}
for (let ppm = 115; ppm <= 185; ppm += 5) {
    const y = Math.round(154 + (ppm - 115) * 3.914);
    ticks += `M705 ${y}h3`;
    if (ppm < 185) ticks += `M705 ${y + 10}h2`;
    numbers += `<text x="713" y="${y + 2}">${ppm}</text>`;
}
document.querySelector('#axes').insertAdjacentHTML('beforeend', `<path d="${ticks}"/>${numbers}`);
```
